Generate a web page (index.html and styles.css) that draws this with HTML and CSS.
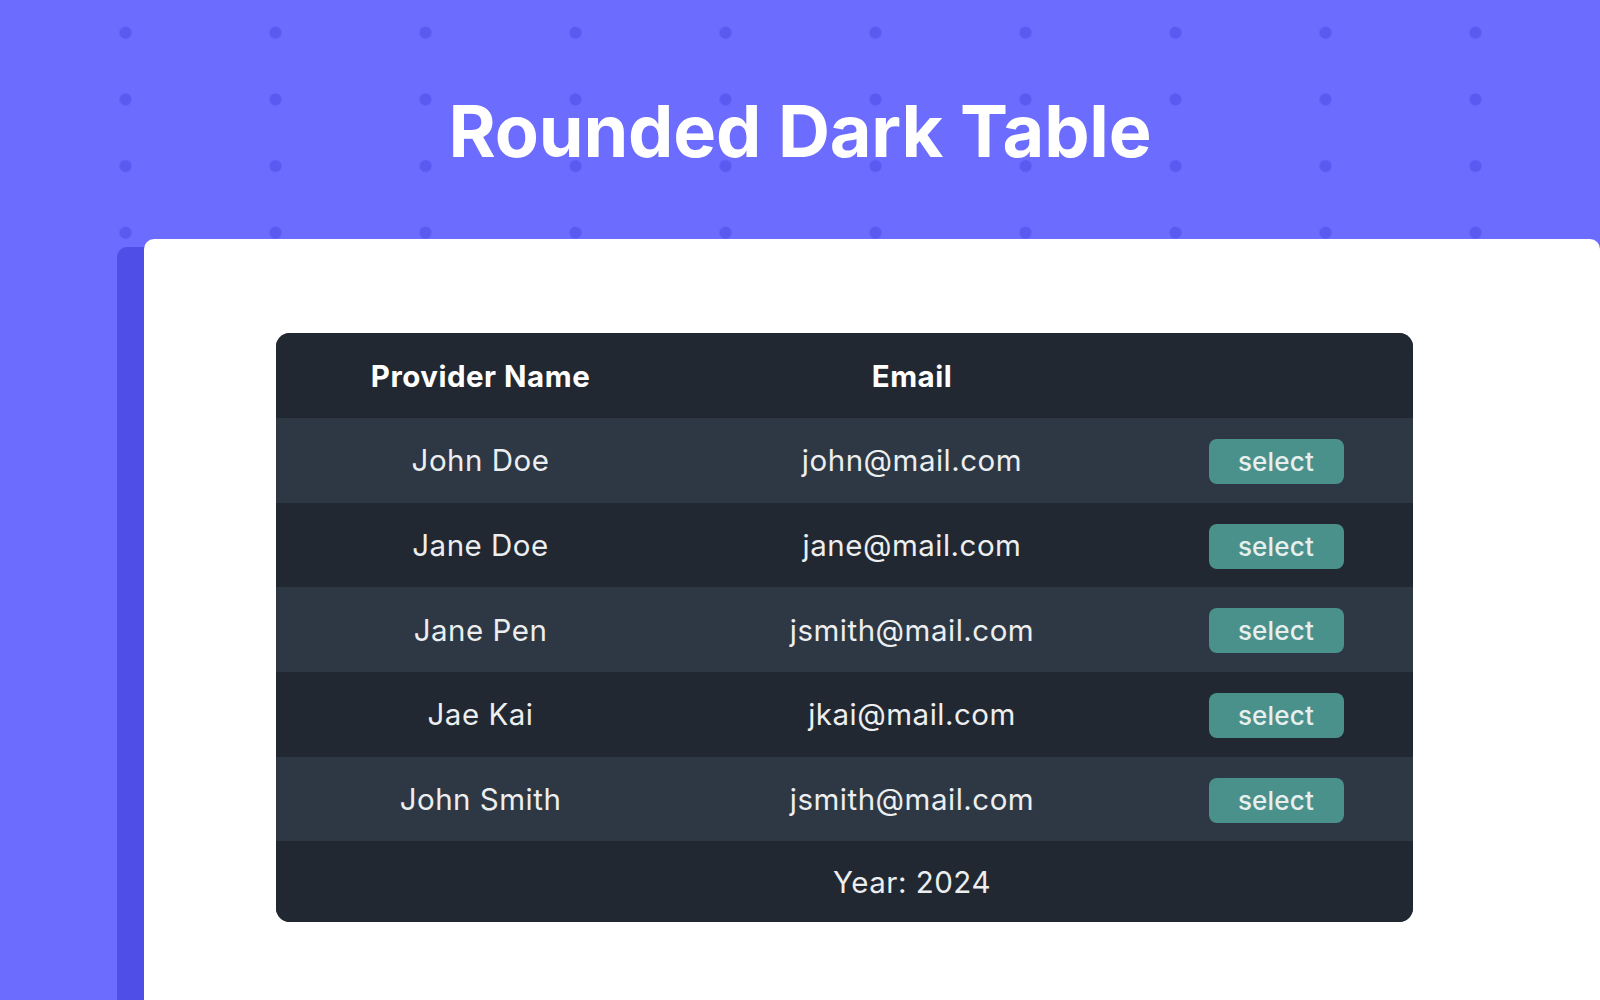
FILE: index.html
```html
<!DOCTYPE html>
<html lang="en">
<head>
<meta charset="utf-8">
<title>Rounded Dark Table</title>
<link rel="stylesheet" href="styles.css">
</head>
<body>
  <header class="hero">
    <h1 class="hero-title">Rounded Dark Table</h1>
  </header>
  <main class="card">
    <div class="table-wrap">
      <table class="providers">
        <colgroup>
          <col class="col-name">
          <col class="col-email">
          <col class="col-action">
        </colgroup>
        <thead>
          <tr>
            <th>Provider Name</th>
            <th>Email</th>
            <th></th>
          </tr>
        </thead>
        <tbody>
          <tr>
            <td>John Doe</td>
            <td>john@mail.com</td>
            <td><button class="select-btn" type="button">select</button></td>
          </tr>
          <tr>
            <td>Jane Doe</td>
            <td>jane@mail.com</td>
            <td><button class="select-btn" type="button">select</button></td>
          </tr>
          <tr>
            <td>Jane Pen</td>
            <td>jsmith@mail.com</td>
            <td><button class="select-btn" type="button">select</button></td>
          </tr>
          <tr>
            <td>Jae Kai</td>
            <td>jkai@mail.com</td>
            <td><button class="select-btn" type="button">select</button></td>
          </tr>
          <tr>
            <td>John Smith</td>
            <td>jsmith@mail.com</td>
            <td><button class="select-btn" type="button">select</button></td>
          </tr>
        </tbody>
        <tfoot>
          <tr>
            <td></td>
            <td>Year: 2024</td>
            <td></td>
          </tr>
        </tfoot>
      </table>
    </div>
  </main>
</body>
</html>
```

FILE: styles.css
```css
html, body {
  margin: 0;
  padding: 0;
}

body {
  height: 1000px;
  overflow: hidden;
  background-color: #6c6cff;
  background-image: radial-gradient(circle, #5a5af0 0, #5a5af0 5.5px, transparent 6.5px);
  background-size: 150px 66.667px;
  background-position: 50.5px -0.6px;
  font-family: Inter, "Liberation Sans", sans-serif;
}

.hero {
  height: 239px;
  box-sizing: border-box;
  padding-top: 95px;
  text-align: center;
}

.hero-title {
  margin: 0;
  font-family: Inter, "Liberation Sans", sans-serif;
  font-weight: 700;
  font-size: 72px;
  line-height: 72px;
  letter-spacing: -0.2px;
  color: #ffffff;
}

.card {
  margin-left: 144px;
  margin-right: 0;
  height: 800px;
  background: #ffffff;
  border-radius: 10px;
  box-shadow: -27px 8px 0 0 #4f4fe8;
  padding: 94px 0 0 132px;
  box-sizing: border-box;
}

.table-wrap {
  width: 1137px;
  border-radius: 14px;
  overflow: hidden;
  background: #222831;
}

.providers {
  width: 100%;
  border-collapse: collapse;
  table-layout: fixed;
  color: #eceef0;
  font-size: 29.5px;
  letter-spacing: 0.5px;
}

.col-name { width: 409px; }
.col-email { width: 454px; }
.col-action { width: 274px; }

.providers th,
.providers td {
  padding: 0;
  text-align: center;
  vertical-align: middle;
}

.providers thead tr {
  height: 85px;
  background: #222831;
}

.providers th {
  font-weight: 700;
  color: #ffffff;
  font-size: 29.5px;
}

.providers tbody tr {
  height: 84.7px;
}

.providers tbody tr:nth-child(odd) {
  background: #2d3844;
}

.providers tbody tr:nth-child(even) {
  background: #222831;
}

.providers tfoot tr {
  height: 81px;
  background: #222831;
}

.select-btn {
  width: 135px;
  height: 45px;
  border: 0;
  border-radius: 8px;
  background: #4a918c;
  color: #e6efed;
  font-family: Inter, "Liberation Sans", sans-serif;
  font-size: 26px;
  font-weight: 500;
  letter-spacing: 0.2px;
  padding: 0;
  cursor: pointer;
  transform: translateY(1px);
}
```
